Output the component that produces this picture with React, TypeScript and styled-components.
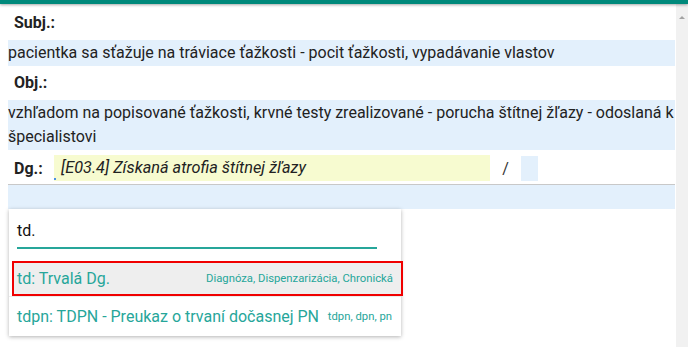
import React from "react";
import styled, { createGlobalStyle } from "styled-components";

const Global = createGlobalStyle`
  html, body { margin: 0; padding: 0; background: #fff; }
  body { font-family: Roboto, "Noto Sans", sans-serif; color: #222; }
  * { box-sizing: border-box; }
`;

const Page = styled.div`
  width: 688px;
  height: 347px;
  overflow: hidden;
  display: flex;
  flex-direction: column;
  position: relative;
`;

const TopBar = styled.div`
  height: 4px;
  background: #00897b;
  box-shadow: 0 1px 3px rgba(0, 0, 0, 0.35);
  position: relative;
  z-index: 2;
`;

const Body = styled.div`
  flex: 1;
  display: flex;
`;

const Content = styled.div`
  width: 676px;
  padding-left: 8px;
  padding-right: 1px;
  display: flex;
  flex-direction: column;
  position: relative;
`;

const Scrollbar = styled.div`
  width: 12px;
  background: #f1f1f1;
  position: relative;
  display: flex;
  justify-content: center;
  padding-top: 12px;
`;

const Arrow = styled.div`
  width: 0;
  height: 0;
  border-left: 3px solid transparent;
  border-right: 3px solid transparent;
  border-bottom: 3px solid #a3a3a3;
`;

const Label = styled.div<{ $pt?: number }>`
  font-weight: 700;
  font-size: 16px;
  line-height: 24px;
  padding: ${(p) => p.$pt ?? 5}px 6px 5px;
  color: #222;
`;

const TextRow = styled.div`
  background: #e3f0fc;
  font-size: 16px;
  line-height: 24px;
  padding: 1px 0;
  color: #222;
`;

const DgRow = styled.div`
  display: flex;
  align-items: center;
  margin-top: 5px;
  height: 26px;
`;

const DgLabel = styled.div`
  font-weight: 700;
  font-size: 16px;
  width: 46px;
  padding-left: 6px;
`;

const DgInput = styled.div`
  width: 436px;
  height: 26px;
  background: #f7fbd0;
  font-style: italic;
  font-size: 16.3px;
  line-height: 26px;
  padding-left: 7px;
  position: relative;
  &::after {
    content: "";
    position: absolute;
    left: 0;
    bottom: 1px;
    width: 2px;
    height: 2px;
    background: #4a90e2;
  }
`;

const Slash = styled.div`
  font-size: 16px;
  width: 31px;
  text-align: center;
  color: #333;
`;

const SmallBox = styled.div`
  width: 17px;
  height: 25px;
  background: #e3f0fc;
`;

const Divider = styled.div`
  height: 1px;
  background: #c8c8c8;
  margin-top: 3px;
`;

const EmptyRow = styled.div`
  height: 24px;
  background: #e3f0fc;
`;

const Dropdown = styled.div`
  position: absolute;
  left: 9px;
  top: 209px;
  width: 392px;
  height: 127px;
  background: #fff;
  box-shadow: 0 1px 4px rgba(0, 0, 0, 0.3);
  z-index: 3;
  display: flex;
  flex-direction: column;
`;

const SearchWrap = styled.div`
  padding: 10px 24px 0 8px;
`;

const SearchInput = styled.div`
  font-size: 16px;
  line-height: 24px;
  height: 30px;
  color: #111;
  border-bottom: 2px solid #26a69a;
`;

const Items = styled.div`
  margin-top: 12px;
  display: flex;
  flex-direction: column;
`;

const Item = styled.div<{ $active?: boolean }>`
  display: flex;
  align-items: center;
  justify-content: space-between;
  height: ${(p) => (p.$active ? 35 : 39)}px;
  padding: 0 ${(p) => (p.$active ? 8 : 9)}px 0 ${(p) => (p.$active ? 3 : 8)}px;
  margin-left: ${(p) => (p.$active ? 3 : 0)}px;
  margin-right: ${(p) => (p.$active ? -2 : 0)}px;
  background: ${(p) => (p.$active ? "#eeeeee" : "transparent")};
  border: ${(p) => (p.$active ? "2px solid #f00000" : "none")};
  border-top: ${(p) => (p.$active ? "2px solid #f00000" : "1px solid #ececec")};
  color: #26a69a;
`;

const ItemTitle = styled.span`
  font-size: 16px;
  white-space: nowrap;
`;

const ItemTags = styled.span`
  font-size: 11.3px;
  white-space: nowrap;
`;

export default function App() {
  return (
    <Page>
      <Global />
      <TopBar />
      <Body>
        <Content>
          <Label $pt={7}>Subj.:</Label>
          <TextRow>
            pacientka sa sťažuje na tráviace ťažkosti - pocit ťažkosti, vypadávanie vlastov
          </TextRow>
          <Label $pt={5}>Obj.:</Label>
          <TextRow>
            vzhľadom na popisované ťažkosti, krvné testy zrealizované - porucha štítnej žľazy - odoslaná k špecialistovi
          </TextRow>
          <DgRow>
            <DgLabel>Dg.:</DgLabel>
            <DgInput>[E03.4] Získaná atrofia štítnej žľazy</DgInput>
            <Slash>/</Slash>
            <SmallBox />
          </DgRow>
          <Divider />
          <EmptyRow />
        </Content>
        <Scrollbar>
          <Arrow />
        </Scrollbar>
      </Body>
      <Dropdown>
        <SearchWrap>
          <SearchInput>td.</SearchInput>
        </SearchWrap>
        <Items>
          <Item $active>
            <ItemTitle>td: Trvalá Dg.</ItemTitle>
            <ItemTags>Diagnóza, Dispenzarizácia, Chronická</ItemTags>
          </Item>
          <Item>
            <ItemTitle>tdpn: TDPN - Preukaz o trvaní dočasnej PN</ItemTitle>
            <ItemTags>tdpn, dpn, pn</ItemTags>
          </Item>
        </Items>
      </Dropdown>
    </Page>
  );
}
